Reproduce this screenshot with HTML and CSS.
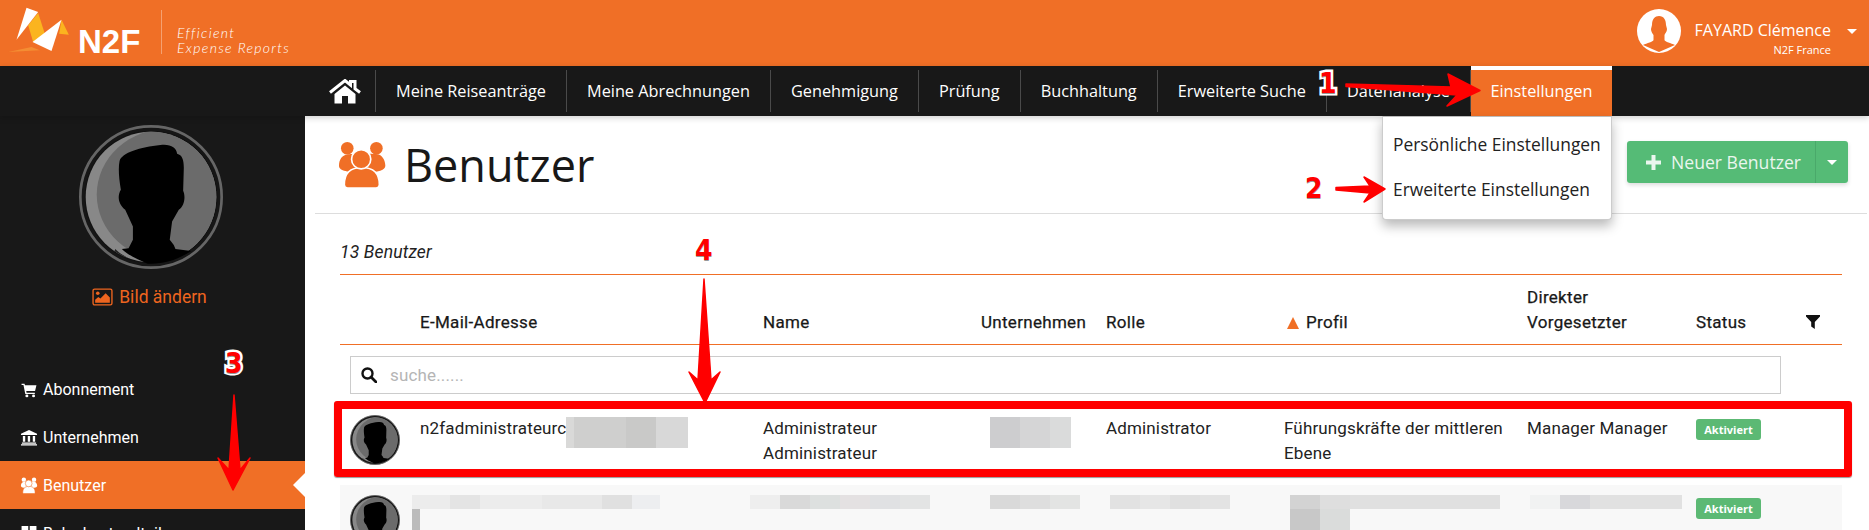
FILE: index.html
```html
<!DOCTYPE html>
<html lang="de">
<head>
<meta charset="utf-8">
<title>N2F – Benutzer</title>
<link rel="stylesheet" href="styles.css">
</head>
<body>
<svg class="defs" width="0" height="0" aria-hidden="true">
  <defs>
    <clipPath id="inner-clip"><circle cx="272" cy="197" r="195"/></clipPath>
    <symbol id="portrait" viewBox="57 -18 430 430">
      <circle cx="272" cy="197" r="211" fill="#161616" stroke="#666" stroke-width="8"/>
      <circle cx="272" cy="197" r="198" fill="#111" />
      <circle cx="272" cy="197" r="195" fill="#888"/>
      <g clip-path="url(#inner-clip)">
        <ellipse cx="325" cy="190" rx="215" ry="198" fill="#6b6b6b"/>
        <path d="M165 352C200 385 240 395 272 398L150 400Z" fill="#222"/>
      </g>
      <path d="M178 90C185 65 240 48 300 42C330 38 348 50 350 68C365 72 370 85 370 110L368 178C376 195 372 225 355 235L335 270L328 325L340 340L345 352L392 358C350 385 310 398 262 396C235 385 205 372 185 352L205 350L218 325L218 285L195 235C175 220 170 195 182 175C176 140 174 110 178 90Z" fill="#000"/>
    </symbol>
    <symbol id="users" viewBox="20 30 155 145">
      <circle cx="53" cy="52" r="19" fill="currentColor"/>
      <circle cx="141" cy="52" r="19" fill="currentColor"/>
      <path d="M28 105C28 85 38 72 55 70C72 68 140 68 145 70C158 72 168 88 168 105C168 118 150 125 100 125C45 125 28 118 28 105Z" fill="currentColor"/>
      <path d="M44 162C44 128 62 110 97 110C132 110 150 128 150 162C150 170 146 172 140 172L54 172C48 172 44 170 44 162Z" fill="currentColor" stroke="var(--gap)" stroke-width="5"/>
      <circle cx="95" cy="85" r="29" fill="currentColor" stroke="var(--gap)" stroke-width="5"/>
    </symbol>
  </defs>
</svg>

<div class="app">
  <header class="topbar">
    <div class="logo">
      <svg class="logo-mark" viewBox="25 20 185 138" aria-hidden="true">
        <path d="M25 155L95 140L120 150Z" fill="#f7a13c" opacity=".6"/>
        <path d="M115 38L135 100L100 125L85 75Z" fill="#fbb41f"/>
        <path d="M185 58L207 103L178 100Z" fill="#fbb41f"/>
        <path d="M80 22L115 35L50 118Z" fill="#fff"/>
        <path d="M185 58L155 152L98 125Z" fill="#fff"/>
      </svg>
      <span class="logo-word">N2F</span>
      <span class="logo-sep"></span>
      <span class="logo-tag">Efficient<br>Expense Reports</span>
    </div>
    <div class="user">
      <svg class="user-pic" viewBox="0 0 44 44" aria-hidden="true">
        <circle cx="22" cy="22" r="22" fill="#fff"/>
        <path d="M15 16C15 10 18 7 22 7C27 7 29 11 29 16L30 20C30 23 28 24 27.500 26L27.500 31C28 33 34 34 38 36L22 43L6 36C10 34 16 33 16.500 31L16.500 26C15 24 14 22 14 20Z" fill="#f06f26"/>
      </svg>
      <div class="user-text">
        <div class="user-name">FAYARD Clémence</div>
        <div class="user-org">N2F France</div>
      </div>
      <span class="caret user-caret"></span>
    </div>
  </header>

  <nav class="navbar">
    <a class="nav-item nav-home">
      <svg class="home-icon" viewBox="0 0 32 25" aria-hidden="true">
        <path d="M1 13.500L16 1.500L21.500 6V2.500H26V9.700L31 13.500" fill="none" stroke="#fff" stroke-width="3"/>
        <path d="M5.500 15L16 6.500L26.500 15V24.500H19V17H13V24.500H5.500Z" fill="#fff"/>
      </svg>
    </a>
    <a class="nav-item">Meine Reiseanträge</a>
    <a class="nav-item">Meine Abrechnungen</a>
    <a class="nav-item">Genehmigung</a>
    <a class="nav-item">Prüfung</a>
    <a class="nav-item">Buchhaltung</a>
    <a class="nav-item">Erweiterte Suche</a>
    <a class="nav-item">Datenanalyse</a>
    <a class="nav-item nav-active">Einstellungen</a>
  </nav>

  <div class="body">
    <aside class="sidebar">
      <svg class="side-portrait"><use href="#portrait"/></svg>
      <a class="change-pic">
        <svg class="pic-icon" viewBox="0 0 20 17" aria-hidden="true">
          <rect x="1" y="1" width="18" height="15" rx="1.500" fill="none" stroke="currentColor" stroke-width="1.300"/>
          <circle cx="5.500" cy="5" r="1.700" fill="currentColor"/>
          <path d="M3 14V11L6 8.500L8 10L13 5L17 9V14Z" fill="currentColor"/>
        </svg>
        Bild ändern
      </a>
      <div class="side-rule"></div>
      <ul class="side-menu">
        <li class="side-item">
          <svg class="side-icon" viewBox="0 0 16 16" aria-hidden="true"><path d="M1 2.500H3.800L4.200 4H15L13.700 9.500H5.400L5.700 11H13.500V12.300H4.500L2.800 3.800H1Z" fill="#fff"/><circle cx="6" cy="14" r="1.400" fill="#fff"/><circle cx="12.300" cy="14" r="1.400" fill="#fff"/></svg>
          Abonnement
        </li>
        <li class="side-item">
          <svg class="side-icon" viewBox="0 0 18 18" aria-hidden="true"><path d="M9 1L17.500 5V6.300H.5V5Z" fill="#fff"/><path d="M2.500 7.300H5V13.500H2.500ZM7.700 7.300H10.200V13.500H7.700ZM13 7.300H15.500V13.500H13Z" fill="#fff"/><path d="M1.500 14.300H16.500V15.600H1.500ZM.5 16.200H17.500V17.500H.5Z" fill="#fff"/></svg>
          Unternehmen
        </li>
        <li class="side-item side-active">
          <svg class="side-icon side-users"><use href="#users"/></svg>
          Benutzer
        </li>
        <li class="side-item">
          <svg class="side-icon" viewBox="0 0 16 16" aria-hidden="true"><path d="M1 1H7.300V7.300H1ZM8.700 1H15V7.300H8.700ZM1 8.700H7.300V15H1ZM8.700 8.700H15V15H8.700Z" fill="#fff"/></svg>
          Belegbestandteile
        </li>
      </ul>
    </aside>

    <main class="main">
      <div class="page-head">
        <div class="page-title">
          <svg class="title-icon"><use href="#users"/></svg>
          <h1>Benutzer</h1>
        </div>
        <div class="btn-group">
          <button class="btn-new">
            <svg class="plus" viewBox="0 0 15 15" aria-hidden="true"><path d="M5.500 0H9.500V5.500H15V9.500H9.500V15H5.500V9.500H0V5.500H5.500Z" fill="currentColor"/></svg>
            Neuer Benutzer
          </button>
          <button class="btn-split"><span class="caret"></span></button>
        </div>
      </div>

      <div class="content">
        <div class="count">13 Benutzer</div>
        <div class="grid grid-head">
          <div></div>
          <div>E-Mail-Adresse</div>
          <div>Name</div>
          <div>Unternehmen</div>
          <div>Rolle</div>
          <div class="th-profile"><span class="sort-up"></span>Profil</div>
          <div>Direkter<br>Vorgesetzter</div>
          <div>Status</div>
          <svg class="filter" viewBox="0 0 14 14" aria-hidden="true"><path d="M0 0H14V1.500L8.800 7V14L5.200 11.500V7L0 1.500Z" fill="#111"/></svg>
        </div>
        <div class="search">
          <svg class="search-icon" viewBox="0 0 16 16" aria-hidden="true"><circle cx="6.500" cy="6.500" r="5" fill="none" stroke="#111" stroke-width="2.400"/><path d="M10 10L15 15" stroke="#111" stroke-width="2.800" stroke-linecap="round"/></svg>
          <span class="search-ph">suche......</span>
        </div>
        <div class="grid row row-first">
          <svg class="row-portrait"><use href="#portrait"/></svg>
          <div class="cell-mail">n2fadministrateurc<span class="mosaic m-mail"></span></div>
          <div>Administrateur<br>Administrateur</div>
          <div><span class="mosaic m-company"></span></div>
          <div>Administrator</div>
          <div class="cell-profile">Führungskräfte der mittleren Ebene</div>
          <div>Manager Manager</div>
          <div><span class="badge">Aktiviert</span></div>
          <div></div>
        </div>
        <div class="grid row row-alt">
          <svg class="row-portrait"><use href="#portrait"/></svg>
          <div class="cell-blur-mail"><span class="mosaic m-mail2"></span><span class="mosaic m-mail3"></span></div>
          <div class="cell-blur-name"><span class="mosaic m-name2"></span></div>
          <div class="cell-blur-co"><span class="mosaic m-co2"></span></div>
          <div class="cell-blur-role"><span class="mosaic m-role2"></span></div>
          <div class="cell-blur-profile"><span class="mosaic m-prof2"></span><span class="mosaic m-prof3"></span></div>
          <div class="cell-blur-mgr"><span class="mosaic m-mgr2"></span></div>
          <div><span class="badge">Aktiviert</span></div>
          <div></div>
        </div>
      </div>

      <div class="dropdown">
        <a class="dd-item">Persönliche Einstellungen</a>
        <a class="dd-item">Erweiterte Einstellungen</a>
      </div>
    </main>
  </div>

  <svg class="arrows" viewBox="0 0 1869 530" aria-hidden="true">
    <g fill="#f00" stroke="#f00" stroke-width="1.500" stroke-linejoin="round">
      <path d="M1346 84L1346 86.500L1457 95L1447 106L1480 90.500L1448 74L1451 87Z"/>
      <path d="M1336 187.500V190L1370 193L1364 202L1385 189L1364 177L1370 186Z"/>
      <path d="M234 395L229 470L218 458L233 490L250 458L240 470Z"/>
      <path d="M704 279L698 380L689 372L705 403L720 372L711 380Z"/>
    </g>
  </svg>
  <span class="mark mark-1">1</span>
  <span class="mark mark-2">2</span>
  <span class="mark mark-3">3</span>
  <span class="mark mark-4">4</span>
  <div class="highlight"></div>
</div>
</body>
</html>
```

FILE: styles.css
```css
* { box-sizing: border-box; }
html, body { margin: 0; padding: 0; background: #fff; }
.defs { position: absolute; }
.app {
  position: relative;
  width: 1869px;
  height: 530px;
  overflow: hidden;
  display: flex;
  flex-direction: column;
  font-family: "Open Sans", sans-serif;
  color: #181818;
}

/* top bar */
.topbar {
  height: 66px;
  flex: none;
  background: #f06f26;
  display: flex;
  align-items: stretch;
  justify-content: space-between;
  color: #fff;
}
.logo { display: flex; align-items: flex-start; padding: 6px 0 0 8px; }
.logo-mark { width: 62px; height: 46px; margin-top: 1px; }
.logo-word {
  margin: 17px 0 0 8px;
  width: 66px;
  font: 700 33px/38px "Liberation Sans", sans-serif;
  color: #fff;
}
.logo-sep {
  width: 1px;
  height: 44px;
  margin: 4px 15px 0 17px;
  background: rgba(255, 255, 255, .35);
}
.logo-tag {
  margin-top: 19px;
  font: italic 300 14px/15px "Lato", sans-serif;
  letter-spacing: 1.3px;
  color: #fff;
}
.user { display: flex; align-items: flex-start; padding: 9px 12px 0 0; }
.user-pic { width: 44px; height: 44px; flex: none; }
.user-text { margin-left: 14px; text-align: right; }
.user-name { font-size: 16px; line-height: 22px; margin-top: 10px; }
.user-org { font-size: 11px; line-height: 14px; font-weight: 500; margin-top: 2px; }
.caret {
  display: inline-block;
  width: 0;
  height: 0;
  border-left: 5px solid transparent;
  border-right: 5px solid transparent;
  border-top: 5px solid #fff;
}
.user-caret { margin: 20px 0 0 16px; }

/* nav bar */
.navbar {
  height: 50px;
  flex: none;
  background: #181818;
  display: flex;
  padding-left: 310px;
  color: #fff;
  position: relative;
  z-index: 1;
  box-shadow: 0 2px 6px rgba(0, 0, 0, .18);
}
.nav-item {
  display: flex;
  align-items: center;
  padding: 0 20px;
  font-size: 16.3px;
  border-right: 1px solid #4a4a4a;
  margin: 4px 0;
}
.nav-home { padding: 0 14px 0 19px; }
.home-icon { width: 32px; height: 25px; }
.nav-active {
  margin: 0;
  background: #f06f26;
  border-top: 4px solid #fff;
  border-right: 0;
  width: 141px;
  padding: 0 0 4px 0;
  justify-content: center;
}

/* layout */
.body { flex: 1; display: flex; min-height: 0; }
.sidebar {
  width: 305px;
  flex: none;
  background: #181818;
  color: #fff;
  display: flex;
  flex-direction: column;
  align-items: center;
  padding-top: 9px;
  font-family: "Roboto", sans-serif;
}
.side-portrait { width: 144px; height: 144px; flex: none; margin-right: 4px; }
.change-pic {
  display: flex;
  align-items: center;
  gap: 6px;
  margin-top: 18px;
  margin-right: 6px;
  font-size: 17.5px;
  line-height: 20px;
  color: #ee651f;
}
.pic-icon { width: 21px; height: 18px; }
.side-rule {
  width: 247px;
  height: 1px;
  margin-top: 33px;
  margin-right: 10px;
  background: linear-gradient(90deg, transparent, #aaa 50%, transparent);
}
.side-menu {
  list-style: none;
  margin: 25px 0 0;
  padding: 0;
  width: 100%;
}
.side-item {
  height: 48px;
  display: flex;
  align-items: center;
  padding-left: 20px;
  gap: 5px;
  font-size: 16px;
  position: relative;
  --gap: #181818;
}
.side-icon { width: 18px; height: 17px; flex: none; color: #fff; }
.side-users { --gap: #f06f26; }
.side-active { background: #f06f26; }
.side-active::after {
  content: "";
  position: absolute;
  right: 0;
  top: 12px;
  border-top: 12px solid transparent;
  border-bottom: 12px solid transparent;
  border-right: 12px solid #fff;
}

/* main */
.main { flex: 1; min-width: 0; position: relative; }
.page-head {
  height: 98px;
  margin-left: 10px;
  margin-right: 2px;
  border-bottom: 1px solid #ddd;
  display: flex;
  justify-content: space-between;
  padding: 25px 19px 0 21px;
}
.page-title { display: flex; align-items: flex-start; gap: 16px; }
.title-icon { width: 52px; height: 48px; color: #f06f26; --gap: #fff; }
.page-title h1 {
  margin: -6px 0 0;
  font-size: 45px;
  line-height: 60px;
  font-weight: 400;
  color: #181818;
}
.btn-group {
  display: flex;
  height: 42px;
  border-radius: 3px;
  box-shadow: 0 2px 4px rgba(0, 0, 0, .14);
  overflow: hidden;
}
.btn-new, .btn-split {
  border: 0;
  background: #55bb76;
  color: #eaf6ee;
  font: 400 17.6px "Open Sans", sans-serif;
  display: flex;
  align-items: center;
  justify-content: center;
}
.btn-new { width: 188px; gap: 10px; padding: 0 0 0 5px; }
.btn-split { width: 33px; border-left: 1px solid #4aa96a; }
.plus { width: 15px; height: 15px; }

.content {
  margin: 0 27px 0 35px;
  font-family: "Roboto", sans-serif;
  font-size: 17px;
  letter-spacing: .15px;
  line-height: 25px;
  color: #222;
}
.count {
  height: 61px;
  padding-top: 26px;
  line-height: 25px;
  font-style: italic;
  font-size: 17.5px;
  border-bottom: 1px solid #f06f26;
  color: #222;
}
.grid {
  display: grid;
  grid-template-columns: 80px 343px 218px 125px 178px 243px 169px 110px 36px;
}
.grid-head {
  height: 70px;
  align-items: end;
  padding-bottom: 9px;
  font-weight: 400;
  letter-spacing: .3px;
  -webkit-text-stroke: .25px #181818;
  border-bottom: 1px solid #f06f26;
  color: #181818;
}
.th-profile { display: flex; align-items: center; padding-left: 3px; gap: 7px; }
.sort-up {
  width: 0;
  height: 0;
  border-left: 6px solid transparent;
  border-right: 6px solid transparent;
  border-bottom: 12px solid #f06f26;
}
.filter { width: 14px; height: 14px; margin-bottom: 6px; }
.search {
  height: 38px;
  margin: 11px 61px 0 10px;
  border: 1px solid #ccc;
  display: flex;
  align-items: center;
  padding-left: 10px;
  gap: 13px;
}
.search-icon { width: 16px; height: 16px; }
.search-ph { color: #b5b5b5; font-size: 17px; }
.row { min-height: 60px; }
.row-first { margin-top: 15px; padding-top: 7px; height: 68px; color: #222; }
.row-alt { background: #f8f8f8; margin-top: 8px; padding-top: 10px; height: 60px; }
.row-portrait { width: 50px; height: 50px; margin-left: 10px; margin-top: -1px; }
.row-alt .row-portrait { margin-top: 0; }
.cell-mail { display: flex; align-items: flex-start; }
.cell-profile { padding-right: 16px; }
.mosaic { display: block; }
.m-mail {
  width: 122px;
  height: 31px;
  margin-top: 1px;
  background: linear-gradient(90deg, #d9d9d8 0 8px, #cfcfce 8px 60px, #c9c9c8 60px 90px, #d8d8d8 90px);
}
.m-company {
  width: 81px;
  height: 31px;
  margin-top: 1px;
  margin-left: 9px;
  background: linear-gradient(90deg, #cdcdcf 0 30px, #d5d5d6 30px 60px, #dadbdb 60px);
}
.m-mail2 {
  width: 248px;
  height: 14px;
  margin-left: -8px;
  background: linear-gradient(90deg, #ececec 0 38px, #e4e4e4 38px 68px, #ececec 68px 130px, #e8e8e8 130px 190px, #e0e0e0 190px 220px, #edeef0 220px);
}
.m-mail3 { width: 8px; height: 30px; margin-left: -8px; background: #bbb; }
.m-name2 {
  width: 180px;
  height: 14px;
  margin-left: -13px;
  background: linear-gradient(90deg, #eee 0 30px, #d9d9d9 30px 60px, #dde0df 60px 90px, #e4e1e2 90px 120px, #e0e1e3 120px 150px, #e3e4e4 150px);
}
.m-co2 {
  width: 90px;
  height: 14px;
  margin-left: 9px;
  background: linear-gradient(90deg, #d9d9d9 0 30px, #dedede 30px 60px, #e3e4e3 60px);
}
.m-role2 {
  width: 120px;
  height: 14px;
  margin-left: 4px;
  background: linear-gradient(90deg, #e2e2e2 0 30px, #e6e6e6 30px 60px, #e0e0e0 60px 90px, #e3e3e3 90px);
}
.m-prof2 {
  width: 210px;
  height: 14px;
  margin-left: 6px;
  background: linear-gradient(90deg, #d3d3d3 0 30px, #dedede 30px 60px, #e0e0e0 60px 210px);
}
.m-prof3 {
  width: 60px;
  height: 30px;
  margin-left: 6px;
  background: linear-gradient(90deg, #c8c8c8 0 30px, #dadcdb 30px);
}
.m-mgr2 {
  width: 152px;
  height: 14px;
  margin-left: 3px;
  background: linear-gradient(90deg, #f1f2f2 0 30px, #d8d8db 30px 60px, #e1e1e1 60px);
}
.badge {
  display: inline-block;
  width: 65px;
  height: 21px;
  margin-top: 3px;
  border-radius: 3px;
  background: #5cb974;
  color: #fff;
  font: 700 11px/21px "Open Sans", sans-serif;
  letter-spacing: 0;
  text-align: center;
  vertical-align: top;
}

/* overlays */
.dropdown {
  position: absolute;
  top: 0;
  left: 1077px;
  width: 230px;
  height: 104px;
  background: #fff;
  border: 1px solid #ccc;
  border-top-color: #bbb;
  border-radius: 0 0 4px 4px;
  box-shadow: 0 6px 12px rgba(0, 0, 0, .28);
  padding-top: 5px;
  z-index: 2;
}
.dd-item {
  display: block;
  height: 45px;
  line-height: 45px;
  padding-left: 10px;
  font-size: 17.4px;
  color: #222;
  white-space: nowrap;
}
.highlight {
  position: absolute;
  left: 334px;
  top: 401px;
  width: 1518px;
  height: 76px;
  border: 8px solid #f00;
  border-radius: 3px;
  z-index: 3;
  box-shadow: 0 1px 1px rgba(0, 0, 0, .4);
}
.arrows {
  position: absolute;
  left: 0;
  top: 0;
  width: 1869px;
  height: 530px;
  z-index: 4;
  pointer-events: none;
}
.mark {
  position: absolute;
  z-index: 5;
  font: 700 28px/30px "DejaVu Sans", sans-serif;
  font-stretch: condensed;
  color: #f00;
  -webkit-text-stroke: 5px #fff;
  paint-order: stroke fill;
  text-shadow: 0 1px 0 #999;
}
.mark-1 { left: 1319px; top: 69px; }
.mark-2 { left: 1305px; top: 174px; }
.mark-3 { left: 225px; top: 349px; }
.mark-4 { left: 695px; top: 236px; }
```
